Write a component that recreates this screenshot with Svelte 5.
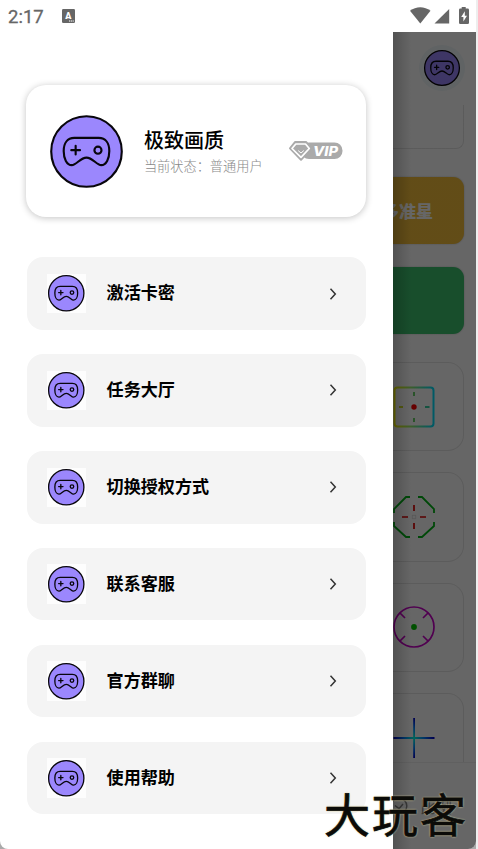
<script lang="ts">
	const menu = ['激活卡密', '任务大厅', '切换授权方式', '联系客服', '官方群聊', '使用帮助'];
	const sights = ['square', 'octagon', 'circle', 'cross'];
</script>

{#snippet gamepad(line = 2.1)}
	<svg class="gamepad" viewBox="0 0 72 72">
		<circle cx="36" cy="36" r="34.8" fill="#9b87fd" stroke="#08060c" stroke-width={line} />
		<g fill="none" stroke="#08060c" stroke-width={line} stroke-linecap="round" stroke-linejoin="round">
			<path
				d="M24 22.5H48C55 22.5 58.5 28 58.5 35.5C58.5 43 55.5 49.5 50.5 49.5C46 49.5 42 42 36 42S26 49.5 21.5 49.5C16.5 49.5 13.5 43 13.5 35.5C13.5 28 17 22.5 24 22.5Z"
			/>
			<path d="M21 34.7h8.6M25.3 30.4V39" />
			<circle cx="47.3" cy="34.7" r="3.5" />
		</g>
	</svg>
{/snippet}

<div class="screen">
	<header class="status">
		<span class="time">2:17</span>
		<svg class="app-icon" viewBox="0 0 13 14">
			<rect width="13" height="14" rx="1.2" fill="#666" />
			<text x="6.4" y="9.8" text-anchor="middle">A</text>
			<path d="M7 12h5" stroke="#fff" stroke-width="1" stroke-dasharray="1.2 .6" />
		</svg>
		<svg class="signals" viewBox="0 0 60 18" fill="#666">
			<path d="M0 3.8C6-1.1 14.5-1.1 20.5 3.8L10.3 16.6Z" />
			<path d="M39.2 2V16.6H24.5Z" />
			<path
				fill-rule="evenodd"
				d="M51.7 0h4v1.6h2q1.3 0 1.3 1.3V15.7q0 1.3-1.3 1.3H50.3Q49 17 49 15.7V2.9Q49 1.6 50.3 1.6h1.4ZM54.8 4.3L51.2 10h2.2v4.6L57 8.7h-2.2Z"
			/>
		</svg>
	</header>

	<div class="body">
		<aside class="drawer">
			<section class="profile">
				<div class="avatar">{@render gamepad()}</div>
				<div class="who">
					<h1>极致画质</h1>
					<p>当前状态：普通用户</p>
				</div>
				<svg class="vip" viewBox="0 0 54 20">
					<rect x="12" y="1.5" width="41.5" height="16.5" rx="8" fill="#aaa" />
					<path d="M6 1H17L22.5 7.3L12 18.8L1 7.3Z" fill="#aaa" stroke="#aaa" stroke-width="2" stroke-linejoin="round" />
					<path d="M6.8 3H16.5L20.3 7.5L12 16.3L3 7.5Z" fill="#aaa" stroke="#fff" stroke-width="1.7" stroke-linejoin="round" />
					<path d="M9.2 9.6L12 12L14.8 9.6" fill="none" stroke="#fff" stroke-width="1" />
					<text x="24" y="14.7" textLength="25" lengthAdjust="spacingAndGlyphs">VIP</text>
				</svg>
			</section>

			<nav class="menu">
				{#each menu as label}
					<div class="item">
						<span class="thumb">{@render gamepad(2.6)}</span>
						<span class="label">{label}</span>
						<svg class="chevron" viewBox="0 0 8 12">
							<path d="M1.5 .8L6.3 6L1.5 11.2" fill="none" stroke="#333" stroke-width="1.5" />
						</svg>
					</div>
				{/each}
			</nav>
		</aside>

		<main class="page">
			<div class="top">{@render gamepad(2.6)}</div>
			<div class="notice"></div>
			<div class="tile gold">多准星</div>
			<div class="tile green"></div>
			<div class="sights">
				{#each sights as kind}
					<div class="sight">
						<svg viewBox="0 0 42 42" fill="none">
							{#if kind === 'square'}
								<defs>
									<linearGradient id="rim">
										<stop stop-color="#ffff00" />
										<stop offset=".5" stop-color="#80e880" />
										<stop offset="1" stop-color="#00e0ff" />
									</linearGradient>
								</defs>
								<rect x="1.5" y="1.5" width="39" height="39" rx="3" stroke="url(#rim)" stroke-width="2" />
								<path d="M21 6v4M21 32v4" stroke="#4ec84e" stroke-width="1.7" />
								<path d="M6 21h4" stroke="#c8d800" stroke-width="1.7" />
								<path d="M32 21h4.5" stroke="#10c890" stroke-width="1.7" />
								<circle cx="21" cy="21" r="2.7" fill="#f00" />
							{:else if kind === 'octagon'}
								<path
									d="M17 1H13L1 13V17M25 1H29L41 13V17M41 26V30L29 41H25M17 41H13L1 30V26"
									stroke="#00b414"
									stroke-width="1.8"
								/>
								<path d="M21 9v6M21 27v6M9 21h6M27 21h6" stroke="#e00000" stroke-width="1.7" />
								<rect x="19.3" y="19.3" width="3.4" height="3.4" stroke="#ddd" stroke-width=".9" />
							{:else if kind === 'circle'}
								<circle cx="21" cy="21" r="20" stroke="#c800c8" stroke-width="1.7" />
								<path d="M7 7l5 5M35 7l-5 5M7 35l5-5M35 35l-5-5" stroke="#c800c8" stroke-width="1.7" />
								<circle cx="21" cy="21" r="2.9" fill="#00c800" />
							{:else}
								<defs>
									<radialGradient id="glow" gradientUnits="userSpaceOnUse" cx="21" cy="21" r="20">
										<stop stop-color="#00ffe0" />
										<stop offset=".5" stop-color="#0080ff" />
										<stop offset="1" stop-color="#0000c8" />
									</radialGradient>
								</defs>
								<path fill="url(#glow)" d="M20.2 1H22V41H20.2ZM.5 20.1H41.5V21.9H.5Z" />
							{/if}
						</svg>
					</div>
				{/each}
			</div>
			<footer class="tabs">
				<svg viewBox="0 0 18 18" fill="none" stroke="#888" stroke-width="1.5">
					<circle cx="9" cy="9" r="7.8" />
					<path d="M5 8.5l4 3.2L13 7" />
				</svg>
				<span>比例</span>
			</footer>
			<div class="scrim"></div>
		</main>
	</div>
	<i class="mark one"></i>
	<i class="mark two"></i>
	<div class="watermark">大玩客</div>
</div>

<style>
	:global(body) {
		margin: 0;
		background: #fff;
		font-family: 'Noto Sans CJK SC', sans-serif;
	}

	.screen {
		position: relative;
		box-sizing: border-box;
		width: 478px;
		height: 849px;
		border-right: 2px solid #eee;
		background: #aaa;
		overflow: hidden;
	}

	svg {
		display: block;
		flex: none;
		overflow: visible;
	}

	.gamepad {
		width: 100%;
		height: 100%;
	}

	.status {
		display: flex;
		align-items: center;
		box-sizing: border-box;
		height: 32px;
		padding: 0 6px 0 8px;
		background: #fff;
		color: #666;
	}

	.time {
		width: 54px;
		padding-top: 1px;
		font: 400 18.5px/32px Roboto, sans-serif;
		-webkit-text-stroke: 0.3px #666;
	}

	.app-icon {
		width: 13px;
		height: 14px;
	}

	.app-icon text {
		font: 900 9px Roboto, sans-serif;
		fill: #fff;
	}

	.signals {
		width: 60px;
		height: 18px;
		margin: 0 0 1px auto;
	}

	.body {
		display: flex;
		height: 817px;
	}

	.drawer {
		box-sizing: border-box;
		width: 393px;
		padding: 53px 26.6px 0 26.4px;
		background: #fff;
		border-bottom-left-radius: 8px;
	}

	.profile {
		display: flex;
		align-items: center;
		box-sizing: border-box;
		height: 132px;
		padding: 0 23.5px;
		border-radius: 20px;
		background: #fff;
		box-shadow: 0 1px 7px rgba(0, 0, 0, 0.24);
	}

	.avatar {
		width: 73px;
		height: 73px;
	}

	.who {
		flex: 1;
		padding: 1px 0 0 21px;
	}

	h1 {
		margin: 0;
		font-size: 20px;
		font-weight: 500;
		line-height: 28px;
		color: #000;
	}

	p {
		margin: 0;
		font-size: 13.2px;
		font-weight: 300;
		line-height: 24px;
		white-space: nowrap;
		color: #888;
	}

	.vip {
		width: 54px;
		height: 20px;
	}

	.vip text {
		font: italic 800 13px Inter, sans-serif;
		fill: #fff;
	}

	.menu {
		display: grid;
		gap: 24.4px;
		margin: 40.3px 0 0 0.2px;
	}

	.item {
		display: flex;
		align-items: center;
		box-sizing: border-box;
		height: 72.5px;
		padding: 0 29px 0 20px;
		border-radius: 16px;
		background: #f4f4f4;
	}

	.thumb {
		box-sizing: border-box;
		width: 39.5px;
		height: 39.5px;
		padding: 1.5px;
		background: #fdfdfd;
	}

	.label {
		flex: 1;
		padding: 0 0 3px 20.5px;
		font-size: 17.1px;
		font-weight: 700;
		line-height: 24px;
		color: #000;
	}

	.chevron {
		width: 8px;
		height: 12px;
	}

	.page {
		position: relative;
		display: flex;
		flex-direction: column;
		box-sizing: border-box;
		width: 83px;
		padding-right: 12px;
		border-bottom-right-radius: 8px;
		background: #fff;
		overflow: hidden;
	}

	.top {
		flex: none;
		align-self: flex-end;
		width: 36px;
		height: 36px;
		margin: 18px 4.5px 19px 0;
		border-radius: 50%;
		box-shadow: 0 0 0 5px #f0f7fa;
	}

	.notice {
		flex: none;
		box-sizing: border-box;
		height: 44px;
		border: solid #e4e4e4;
		border-width: 0 1.5px 1.5px 0;
		border-bottom-right-radius: 8px;
	}

	.tile {
		flex: none;
		display: flex;
		align-items: center;
		justify-content: flex-end;
		box-sizing: border-box;
		height: 66.5px;
		padding-right: 31px;
		border-radius: 0 11px 11px 0;
		font-size: 17px;
		font-weight: 900;
		white-space: nowrap;
		color: #fff;
		box-shadow: 0 0 2px rgba(0, 0, 0, 0.25);
		overflow: hidden;
	}

	.gold {
		margin-top: 28px;
		background: #f5bf3a;
	}

	.green {
		margin-top: 23.5px;
		background: #3cc26e;
	}

	.sights {
		flex: none;
		display: grid;
		grid-auto-rows: 89.3px;
		gap: 21px;
		height: 400px;
		margin-top: 28.5px;
		overflow: hidden;
	}

	.sight {
		display: flex;
		align-items: center;
		box-sizing: border-box;
		border: solid #e6e6e6;
		border-width: 1px 1.5px 1px 0;
		border-radius: 0 16px 16px 0;
	}

	.sight svg {
		width: 42px;
		height: 42px;
		margin-left: 0.4px;
	}

	.tabs {
		display: flex;
		align-items: center;
		flex: 1;
		gap: 12px;
		margin-right: -12px;
		border-top: 1px solid #f0f0f0;
		font-size: 16px;
		color: #888;
	}

	.tabs svg {
		width: 18px;
		height: 18px;
		margin-left: -3px;
	}

	.scrim {
		position: absolute;
		inset: 0;
		background: linear-gradient(90deg, rgba(0, 0, 0, 0.68), rgba(0, 0, 0, 0.6) 18px);
	}

	.mark {
		position: absolute;
		right: -2px;
		width: 2px;
		height: 8px;
		background: #222;
	}

	.one {
		top: 261px;
	}

	.two {
		top: 509px;
	}

	.watermark {
		position: absolute;
		top: 778px;
		left: 324px;
		font-size: 46px;
		font-weight: 400;
		line-height: 68px;
		letter-spacing: 2px;
		white-space: nowrap;
		color: #0b0b08;
		-webkit-text-stroke: 0.7px #0b0b08;
		text-shadow:
			0 0 2px #d8cfa0,
			0 0 2px #d8cfa0;
	}
</style>
